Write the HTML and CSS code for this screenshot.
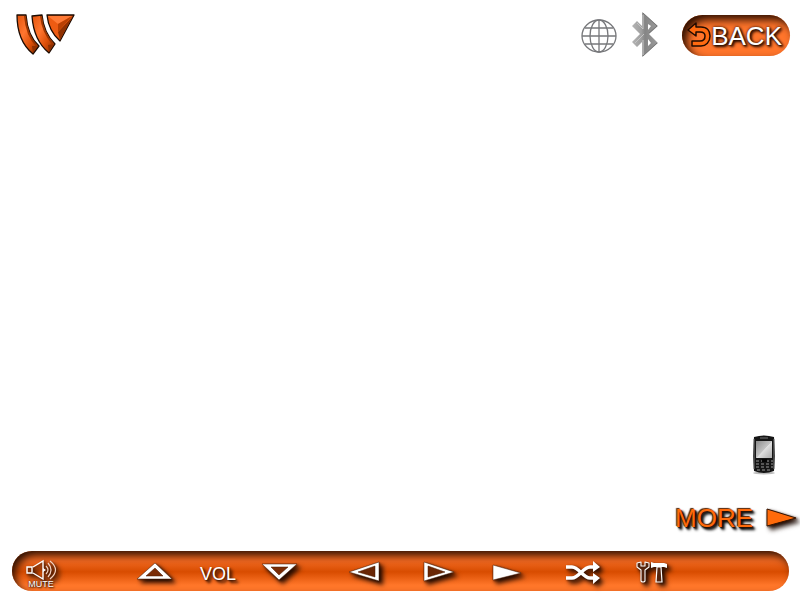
FILE: index.html
```html
<!DOCTYPE html>
<html lang="en">
<head>
<meta charset="utf-8">
<title>Media control</title>
<link rel="stylesheet" href="styles.css">
</head>
<body>
<header class="top">
  <a class="logo" href="#" aria-label="Home">
    <svg width="64" height="47" viewBox="0 0 64 47">
      <defs>
        <linearGradient id="band" x1="0" y1="0" x2="1" y2="0.9">
          <stop offset="0" stop-color="#e2530c"/><stop offset=".4" stop-color="#ff7630"/><stop offset=".7" stop-color="#dd4f08"/><stop offset="1" stop-color="#8a2f00"/>
        </linearGradient>
      </defs>
      <g stroke="#1c0b02" stroke-width="1.3" stroke-linejoin="round">
        <path fill="url(#band)" d="M1 3H10C11 16 14 26 23 34L17 42C6 33 1 20 1 3Z"/>
        <path fill="url(#band)" d="M16 4L26 3C27 14 30 23 39 32L33 41C22 32 17 19 16 4Z"/>
        <path fill="#ee5b12" d="M31 3H58L44 29C36 22 32 13 31 3Z"/>
      </g>
      <path fill="#8f3000" d="M57 4L44 28L42 20Z"/>
      <path fill="#ff7a36" d="M32 4H56L42 12Z"/>
      <path fill="#b94003" d="M56 4L42 20V12Z"/>
      <path fill="none" stroke="#9c3500" stroke-width="2" d="M9 4C10 16 13 26 21 34M25 4C26 14 29 23 37 32"/>
      <path fill="#8f3000" d="M22 34L17 41L16 34ZM38 32L33 40L32 33Z"/>
    </svg>
  </a>
  <div class="status">
    <svg width="36" height="36" viewBox="0 0 36 36" role="img" aria-label="Network">
      <g fill="none" stroke="#77787b" stroke-width="1.3">
        <ellipse cx="18" cy="18" rx="17" ry="16"/><ellipse cx="18" cy="18" rx="9" ry="16"/>
        <path d="M18 2V34M1 18H35M4 10H32M4 26H32"/>
      </g>
    </svg>
    <svg width="28" height="47" viewBox="0 0 28 47" role="img" aria-label="Bluetooth">
      <defs><linearGradient id="steel"><stop offset="0" stop-color="#b4b4b4"/><stop offset=".35" stop-color="#a0a0a0"/><stop offset=".5" stop-color="#858585"/><stop offset="1" stop-color="#9c9c9c"/></linearGradient></defs>
      <path fill="url(#steel)" fill-rule="evenodd" d="M11 0L27 14L18 22L27 31L11 45V30L6 35L1 30L9 22L1 14L6 9L11 14ZM17 12V18L20 14ZM17 27V34L20 31Z"/>
      <path fill="none" stroke="#c4c4c4" d="M12 3V17L6 11M12 28V43M4 31L13 22"/>
      <path fill="none" stroke="#777" d="M12 1L26 14L18 21M26 31L12 44"/>
    </svg>
    <button class="back" type="button">
      <svg width="24" height="28" viewBox="0 0 24 28" aria-hidden="true">
        <path fill="#ff6a10" stroke="#210b00" stroke-width="1.5" stroke-linejoin="round" d="M1 8L9 1V5H14C20 5 23 9 23 14C23 20 19 24 14 24H5V19H13C16 19 18 17 18 14C18 11 16 10 13 10H9V14Z"/>
      </svg><span>BACK</span>
    </button>
  </div>
</header>

<main class="content">
  <button class="phone" type="button" aria-label="Phone">
    <svg width="28" height="42" viewBox="0 0 28 42">
      <defs><linearGradient id="glass" x2="1" y2="1"><stop offset="0" stop-color="#8c8c8c"/><stop offset=".5" stop-color="#c4c4c4"/><stop offset=".52" stop-color="#e0e0e0"/><stop offset="1" stop-color="#aaa"/></linearGradient></defs>
      <ellipse cx="14" cy="39" rx="11" ry="1.5" fill="#bbb"/>
      <path fill="#151515" d="M4 3Q14 0 24 3L25 22L24 37Q14 41 4 37L3 22Z"/>
      <path stroke="#777" d="M4 5V35M24 5V35M10 4H18"/>
      <path fill="url(#glass)" d="M6 7H22V24H6Z"/>
      <path stroke="#999" stroke-dasharray="3 2" d="M6 27H23M6 30H23M6 33H23M7 36H22"/>
      <path fill="#050505" d="M12 25H17V28H12Z"/>
    </svg>
  </button>
  <button class="more" type="button">
    <span>MORE</span>
    <svg class="cast" width="36" height="36" viewBox="0 0 36 36" aria-hidden="true"><path fill="#ff6a0a" stroke="#351400" stroke-width="1" d="M3 9L32 18L3 26Z"/></svg>
  </button>
</main>

<footer class="bar">
  <button class="key mute" type="button">
    <svg class="cast" width="40" height="40" viewBox="0 0 40 40" aria-hidden="true">
      <g fill="none" stroke="#fff" stroke-width="1.4">
        <path d="M6 16H11V22H6ZM12 16L22 10V28L12 22"/>
        <path d="M25 15Q29 19 25 23M27 12Q33 19 27 26M29 10Q40 19 29 28" stroke="#f3d3c2" stroke-width="1.2"/>
        <path d="M22 17L25 19L22 21Z" fill="#fff" stroke="none"/>
      </g>
    </svg>
    <span>MUTE</span>
  </button>
  <div class="volume">
    <button class="key" type="button" aria-label="Volume up">
      <svg class="cast" width="40" height="40" viewBox="0 0 40 40"><path fill="#7a2c06" d="M20 16L10 26H29Z"/><path fill="#fff" fill-rule="evenodd" stroke="#4a1a00" stroke-width=".5" d="M20 12L37 28H2ZM20 17L11 25H28Z"/></svg>
    </button>
    <span class="label">VOL</span>
    <button class="key" type="button" aria-label="Volume down">
      <svg class="cast" width="40" height="40" viewBox="0 0 40 40"><path fill="#7a2c06" d="M8 15L18 25L28 15Z"/><path fill="#fff" fill-rule="evenodd" stroke="#4a1a00" stroke-width=".5" d="M1 13H36L18 29ZM10 16L18 24L27 16Z"/></svg>
    </button>
  </div>
  <div class="transport">
    <button class="key" type="button" aria-label="Previous">
      <svg class="cast" width="40" height="40" viewBox="0 0 40 40"><path fill="#6a2605" d="M11 21L30 14V27Z"/><path fill="#fff" fill-rule="evenodd" stroke="#4a1a00" stroke-width=".5" d="M3 21L33 11V30ZM12 21L29 26V15Z"/></svg>
    </button>
    <button class="key" type="button" aria-label="Play">
      <svg class="cast" width="40" height="40" viewBox="0 0 40 40"><path fill="#6a2605" d="M9 14V27L28 21Z"/><path fill="#fff" fill-rule="evenodd" stroke="#4a1a00" stroke-width=".5" d="M6 11L36 21L6 30ZM10 15V26L27 21Z"/></svg>
    </button>
    <button class="key" type="button" aria-label="Next">
      <svg class="cast" width="40" height="40" viewBox="0 0 40 40"><path fill="#fff" stroke="#4a1a00" stroke-width=".5" d="M3 14L31 22L3 29Z"/></svg>
    </button>
    <button class="key" type="button" aria-label="Shuffle">
      <svg class="cast" width="40" height="40" viewBox="0 0 40 40">
        <path fill="none" stroke="#fff" stroke-width="3.4" d="M4 16H10C17 16 21 27 28 27H32M4 27H10C17 27 21 16 28 16H32"/>
        <path fill="#fff" d="M31 10L38 16L31 21ZM31 22L38 27L31 33Z"/>
      </svg>
    </button>
    <button class="key" type="button" aria-label="Settings">
      <svg class="cast" width="40" height="40" viewBox="0 0 40 40">
        <path fill="#54250f" stroke="#fff" stroke-width="1.1" stroke-linejoin="round" d="M7 11L3 12V16L7 19V30Q9 32 11 30V19L15 16V12L11 11V15H7Z"/>
        <path fill="#54250f" stroke="#fff" stroke-width="1.2" d="M23 16H27L28 31H22Z"/>
        <path fill="#fff" d="M17 11L20 12H30L33 13V17L30 16H20L17 17Z"/>
      </svg>
    </button>
  </div>
</footer>
</body>
</html>
```
FILE: styles.css
```css
* { box-sizing: border-box; }

body {
  margin: 0;
  min-height: 100vh;
  display: flex;
  flex-direction: column;
  background: #fff;
  font-family: "Liberation Sans", Arial, sans-serif;
}

button {
  border: 0;
  padding: 0;
  background: none;
  font: inherit;
  color: inherit;
  cursor: pointer;
}

svg { display: block; flex: none; }

.top {
  display: flex;
  justify-content: space-between;
  align-items: center;
  padding: 12px 10px 0 16px;
}

.status {
  display: flex;
  align-items: center;
  gap: 14px;
}

.back {
  display: flex;
  align-items: center;
  height: 41px;
  margin-left: 9px;
  padding: 0 8px 0 5px;
  border-radius: 21px;
  background: #ff752b;
  box-shadow: inset 5px 5px 9px #301000;
  color: #fff;
  font-size: 26px;
  line-height: 41px;
  text-shadow: 2px 2px 3px #2a0d00, 0 0 3px #2a0d00, 1px 1px 2px #2a0d00;
}

.back span { padding-top: 2px; }

.content {
  flex: 1;
  display: flex;
  flex-direction: column;
  justify-content: flex-end;
  align-items: flex-end;
  gap: 24px;
  padding-bottom: 15px;
}

.phone { margin-right: 22px; }

.more {
  display: flex;
  align-items: center;
  gap: 11px;
  color: #ff6a0a;
  font-size: 26px;
  line-height: 36px;
  text-shadow: 1px 1px 1px #2a1000, -1px -1px 1px #542000, 2px 2px 2px #000, 3px 3px 3px #000;
}

.cast {
  filter: drop-shadow(1px 1px 1px rgba(40, 12, 0, 0.8)) drop-shadow(3px 3px 2px rgba(25, 8, 0, 0.9));
}

.bar {
  display: flex;
  align-items: center;
  height: 40px;
  margin: 0 11px 9px 12px;
  padding-left: 9px;
  border-radius: 20px;
  background: linear-gradient(#ef6720, #ef6720 25%, #d84c00 52%, #ff7629 85%, #ff7629);
  box-shadow: inset 4px 5px 8px -1px #280e02;
  color: #fff;
}

.key {
  width: 40px;
  height: 40px;
}

.mute { display: grid; }

.mute > * { grid-area: 1 / 1; }

.mute span {
  align-self: end;
  padding-bottom: 2px;
  font-size: 9px;
  line-height: 10px;
  text-shadow: 1px 1px 2px #2a0d00, 0 0 2px #2a0d00;
  z-index: 1;
}

.volume {
  display: flex;
  align-items: center;
  gap: 23px;
  margin: 0 45px 0 74px;
}

.label {
  width: 40px;
  padding-top: 5px;
  text-align: center;
  font-size: 18px;
  line-height: 20px;
  text-shadow: 3px 3px 3px #2a0d00, 1px 1px 2px #2a0d00;
}

.transport {
  display: flex;
  gap: 32px;
}
```
